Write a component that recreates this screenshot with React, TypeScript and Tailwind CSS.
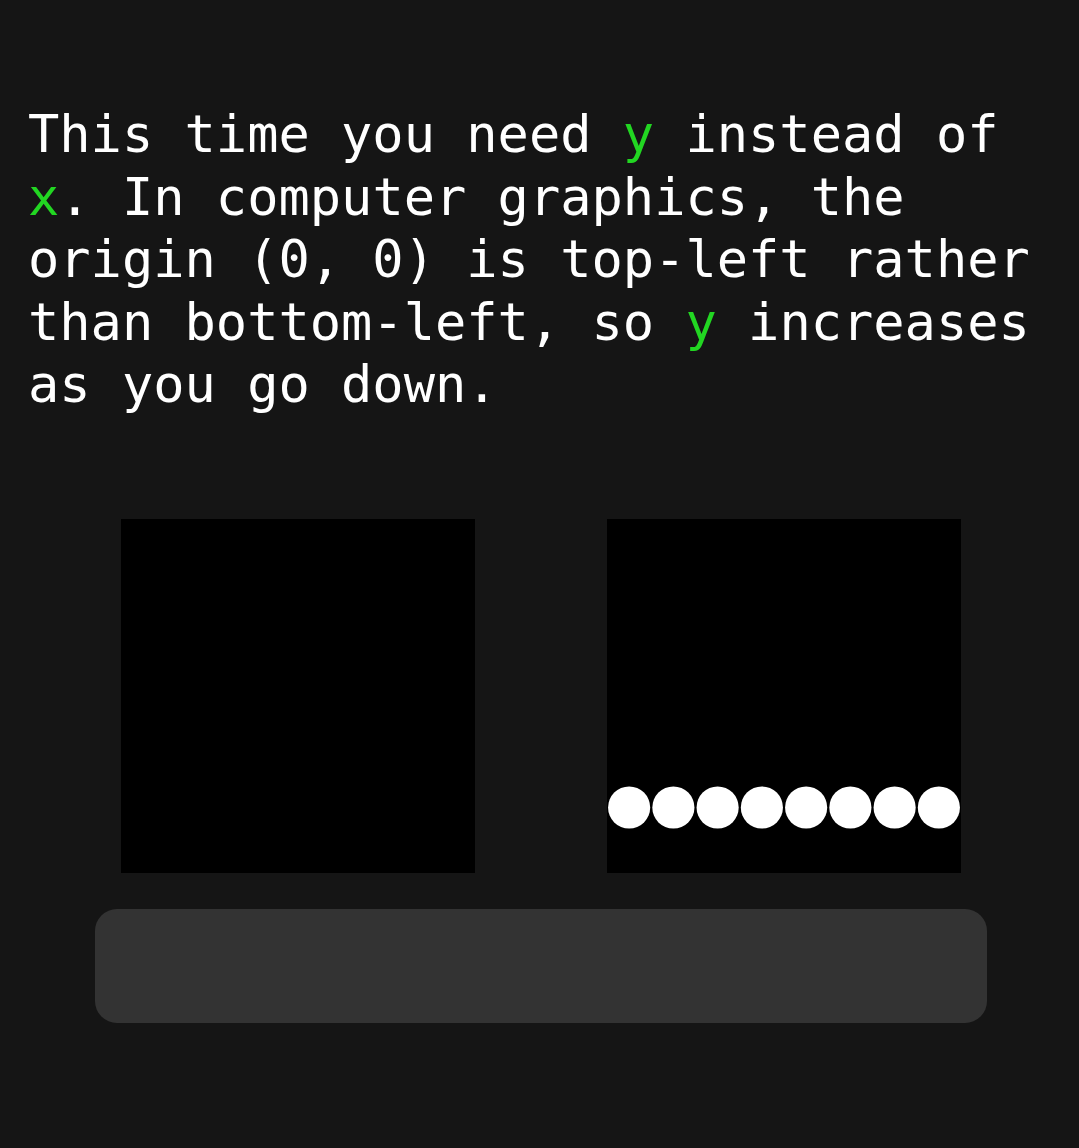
import React from "react";

const Y = () => <span className="text-[#22d622]">y</span>;

export default function App() {
  const dots = Array.from({ length: 8 }, (_, i) => i);

  return (
    <div className="min-h-[1148px] w-full bg-[#151515] flex flex-col">
      {/* Lesson text */}
      <p
        className="px-[28px] pt-[103px] text-[52px] leading-[62.5px] text-white"
        style={{ fontFamily: '"DejaVu Sans Mono", "Liberation Mono", monospace' }}
      >
        This time you need <Y /> instead of <span className="text-[#22d622]">x</span>. In computer graphics, the
        origin (0, 0) is top-left rather than bottom-left, so <Y /> increases as you go down.
      </p>

      {/* Canvases: yours vs expected */}
      <div className="mt-[103.5px] flex justify-center gap-[132px] pl-[3px]">
        <div className="h-[354px] w-[354px] bg-black" />
        <div className="h-[354px] w-[354px] bg-black">
          <svg viewBox="0 0 400 400" className="h-full w-full">
            {dots.map((i) => (
              <circle key={i} cx={25 + i * 50} cy={326} r={23.8} fill="#fff" />
            ))}
          </svg>
        </div>
      </div>

      {/* Code input bar */}
      <div className="mt-[36px] flex justify-center pl-[3px]">
        <div className="h-[114px] w-[892px] rounded-[22px] bg-[#333333]" />
      </div>
    </div>
  );
}
